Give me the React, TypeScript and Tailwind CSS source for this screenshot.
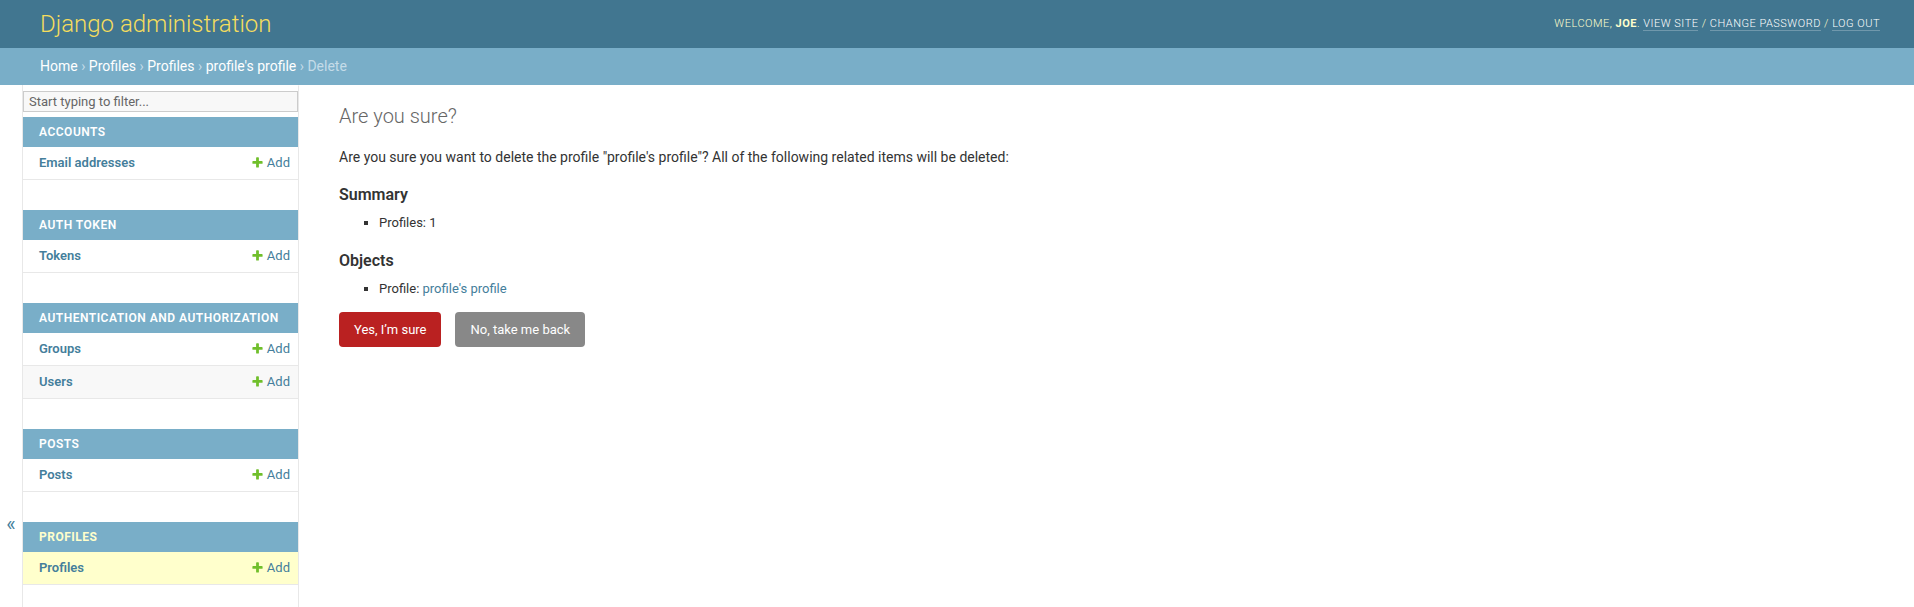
import React from "react";

const AddIcon = () => (
  <svg width="13" height="13" viewBox="0 0 1792 1792" className="absolute left-0 top-[1px]">
    <path
      fill="#70bf2b"
      d="M1600 796v192q0 40-28 68t-68 28h-416v416q0 40-28 68t-68 28h-192q-40 0-68-28t-28-68v-416h-416q-40 0-68-28t-28-68v-192q0-40 28-68t68-28h416v-416q0-40 28-68t68-28h192q40 0 68 28t28 68v416h416q40 0 68 28t28 68z"
    />
  </svg>
);

type Row = { name: string; bg?: string };
type Mod = { title: string; rows: Row[]; current?: boolean };

const modules: Mod[] = [
  { title: "Accounts", rows: [{ name: "Email addresses" }] },
  { title: "Auth Token", rows: [{ name: "Tokens" }] },
  {
    title: "Authentication and Authorization",
    rows: [{ name: "Groups" }, { name: "Users", bg: "bg-[#f8f8f8]" }],
  },
  { title: "Posts", rows: [{ name: "Posts" }] },
  { title: "Profiles", rows: [{ name: "Profiles", bg: "bg-[#ffffcc]" }], current: true },
];

export default function App() {
  return (
    <div className="min-h-[607px] bg-white text-[#333] font-['Roboto','Liberation_Sans',sans-serif] text-[14px]">
      {/* Header */}
      <div className="flex items-center justify-between bg-[#417690] pl-[40px] pr-[34px] py-[10px]">
        <h1 className="m-0 text-[24px] leading-[28px] font-light text-[#f5dd5d]">Django administration</h1>
        <div className="text-[11px] font-light tracking-[0.5px] uppercase text-[#ffffcc]">
          Welcome, <strong className="font-bold">Joe</strong>.{" "}
          <a className="text-white border-b border-white/25">View site</a> /{" "}
          <a className="text-white border-b border-white/25">Change password</a> /{" "}
          <a className="text-white border-b border-white/25">Log out</a>
        </div>
      </div>
      {/* Breadcrumbs */}
      <div className="bg-[#79aec8] px-[40px] py-[10px] text-[14px] leading-[17px] text-[#c4dce8]">
        <a className="text-white">Home</a> › <a className="text-white">Profiles</a> ›{" "}
        <a className="text-white">Profiles</a> › <a className="text-white">profile's profile</a> › Delete
      </div>
      {/* Main */}
      <div className="flex min-h-[522px]">
        <button className="w-[23px] shrink-0 border-r border-[#e8e8e8] flex justify-center items-start pt-[428px] text-[20px] leading-[23px] text-[#447e9b]">
          «
        </button>
        <nav className="w-[276px] shrink-0 border-r border-[#e8e8e8] border-t border-t-transparent">
          <input
            className="block w-full box-border my-[5px] px-[5px] py-[2px] border border-[#cccccc] bg-[#f8f8f8] text-[13px] leading-[15px] text-[#333] placeholder:text-[#666] outline-none"
            placeholder="Start typing to filter..."
          />
          {modules.map((m) => (
            <div key={m.title} className="mb-[30px]">
              <div
                className={`bg-[#79aec8] pl-4 pr-2 py-[8px] text-[12px] leading-[14px] tracking-[0.5px] uppercase whitespace-nowrap ${
                  m.current ? "text-[#ffffcc] font-bold" : "text-white font-semibold"
                }`}
              >
                {m.title}
              </div>
              {m.rows.map((r) => (
                <div key={r.name} className={`flex border-b border-[#e8e8e8] ${r.bg ?? ""}`}>
                  <div className="flex-1 pl-4 pr-2 py-2 text-[13px] leading-[16px] font-semibold text-[#447e9b]">
                    {r.name}
                  </div>
                  <div className="p-2 text-[13px] leading-[16px] text-[#447e9b] whitespace-nowrap">
                    <span className="relative pl-4">
                      <AddIcon />
                      Add
                    </span>
                  </div>
                </div>
              ))}
            </div>
          ))}
        </nav>
        <main className="flex-1 px-[40px] py-[20px]">
          <h1 className="m-0 mb-[20px] text-[20px] leading-[23px] font-light text-[#666]">Are you sure?</h1>
          <p className="mt-0 mb-[11px] leading-[140%] text-[14px]">
            Are you sure you want to delete the profile "profile's profile"? All of the following related items
            will be deleted:
          </p>
          <h2 className="mt-[17px] mb-[8px] text-[16px] leading-[19px] font-semibold text-[#333]">Summary</h2>
          <ul className="ml-0 mt-[4px] mb-[12px] list-[square] pl-[40px]">
            <li className="text-[13px] leading-[20px] py-[1px]">Profiles: 1</li>
          </ul>
          <h2 className="mt-[17px] mb-[8px] text-[16px] leading-[19px] font-semibold text-[#333]">Objects</h2>
          <ul className="ml-0 mt-[4px] mb-[12px] list-[square] pl-[40px]">
            <li className="text-[13px] leading-[20px] py-[1px]">
              Profile: <a className="text-[#447e9b]">profile's profile</a>
            </li>
          </ul>
          <div className="flex items-center gap-[14px]">
            <button className="bg-[#ba2121] text-white text-[13px] leading-[15px] px-[15px] py-[10px] rounded-[4px]">
              Yes, I’m sure
            </button>
            <a className="bg-[#888888] text-white text-[13px] leading-[15px] px-[15px] py-[10px] rounded-[4px]">
              No, take me back
            </a>
          </div>
        </main>
      </div>
    </div>
  );
}
